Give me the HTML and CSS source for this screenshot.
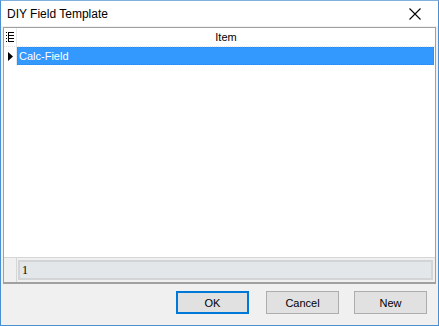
FILE: index.html
```html
<!DOCTYPE HTML>
<html>
<head>
<meta charset="utf-8">
<title>DIY Field Template</title>
<link rel="stylesheet" href="styles.css">
</head>
<body>

<div class="window">
	<!-- title bar -->
	<div class="titlebar">
		<span class="title">DIY Field Template</span>
		<span class="close">
			<svg width="12" height="12" viewBox="0 0 12 12"><path d="M0.5 0.5 L11.5 11.5 M11.5 0.5 L0.5 11.5" stroke="#000" stroke-width="1.1"/></svg>
		</span>
	</div>

	<div class="client">
		<div class="grid">
			<div class="grid-head">
				<div class="indicator">
					<svg width="8" height="10" viewBox="0 0 8 10">
						<rect x="0" y="0" width="1" height="1" fill="#000"/><rect x="2" y="0" width="6" height="1" fill="#000"/>
						<rect x="0" y="3" width="1" height="1" fill="#000"/><rect x="2" y="3" width="6" height="1" fill="#000"/>
						<rect x="0" y="6" width="1" height="1" fill="#000"/><rect x="2" y="6" width="6" height="1" fill="#000"/>
						<rect x="0" y="9" width="1" height="1" fill="#000"/><rect x="2" y="9" width="6" height="1" fill="#000"/>
						<rect x="2" y="1" width="1" height="8" fill="#000"/>
					</svg>
				</div>
				<div class="head-cell">Item</div>
			</div>
			<div class="grid-row">
				<div class="indicator">
					<svg width="5" height="9" viewBox="0 0 5 9"><path d="M0 0 L5 4.5 L0 9 Z" fill="#000"/></svg>
				</div>
				<div class="cell selected">Calc-Field</div>
			</div>
			<div class="grid-body"></div>
			<div class="grid-foot">
				<div class="foot-gap"></div>
				<div class="foot-cell">1</div>
			</div>
		</div>

		<div class="buttons">
			<button class="btn default">OK</button>
			<button class="btn">Cancel</button>
			<button class="btn">New</button>
		</div>
	</div>
</div>

</body>
</html>
```

FILE: styles.css
```css
html, body {
  margin: 0;
  padding: 0;
}
body {
  width: 439px;
  height: 326px;
  font-family: "Liberation Sans", Arial, sans-serif;
  font-size: 12px;
  background: #f0f0f0;
}

.window {
  box-sizing: border-box;
  width: 439px;
  height: 326px;
  border: 1px solid #4a90d0;
  border-top: 1px solid #7fb0de;
  display: flex;
  flex-direction: column;
  background: #f0f0f0;
}

.titlebar {
  height: 25px;
  background: #fff;
  display: flex;
  align-items: center;
  justify-content: space-between;
  padding: 0 0 0 6px;
}
.title {
  font-size: 12px;
  color: #000;
}
.close {
  width: 46px;
  height: 25px;
  display: flex;
  align-items: center;
  justify-content: center;
}

.client {
  flex: 1;
  display: flex;
  flex-direction: column;
  padding: 1px 2px 0 2px;
}

.grid {
  height: 254px;
  border: 1px solid #a0a0a0;
  border-bottom: 2px solid #a0a0a0;
  background: #fff;
  display: flex;
  flex-direction: column;
}

.grid-head, .grid-row {
  display: flex;
  height: 18px;
}
.grid-head {
  border-bottom: 1px dotted #e4e4e4;
}
.indicator {
  width: 12px;
  display: flex;
  align-items: center;
  justify-content: center;
  border-right: 1px solid #e8e8e8;
}
.head-cell {
  flex: 1;
  text-align: center;
  line-height: 18px;
  font-size: 11px;
}
.cell {
  flex: 1;
  line-height: 16px;
  padding-left: 1px;
  font-size: 11px;
}
.selected {
  background: #3399ff;
  color: #fff;
  border: 1px dotted #6a7d90;
  margin-right: 1px;
}

.grid-body {
  flex: 1;
}

.grid-foot {
  display: flex;
  height: 24px;
  background: #f0f0f0;
  border-top: 1px solid #d6d6d6;
}
.foot-gap {
  width: 12px;
  border-right: 1px solid #d6d6d6;
}
.foot-cell {
  flex: 1;
  margin: 2px 2px 2px 1px;
  background: #e4e7ea;
  border: 2px solid #d2d4d6;
  line-height: 16px;
  padding-left: 2px;
  font-family: "Liberation Serif", serif;
  font-size: 12px;
}

.buttons {
  display: flex;
  justify-content: flex-end;
  gap: 15px;
  padding: 7px 9px 0 0;
}
.btn {
  width: 73px;
  height: 23px;
  background: #e1e1e1;
  border: 1px solid #adadad;
  font-family: "Liberation Sans", Arial, sans-serif;
  font-size: 11px;
  color: #000;
  padding: 0;
}
.btn.default {
  border: 2px solid #0078d7;
  margin-right: 2px;
}
```
